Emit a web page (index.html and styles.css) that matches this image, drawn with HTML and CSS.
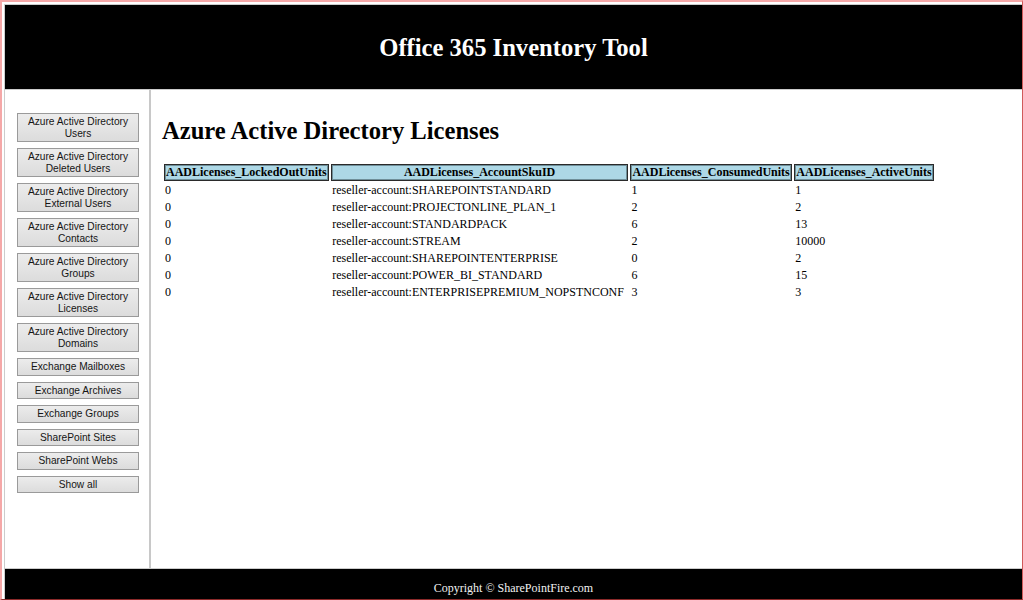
FILE: index.html
```html
<!DOCTYPE html>
<html>
<head>
<meta charset="utf-8">
<title>Office 365 Inventory Tool</title>
<link rel="stylesheet" href="styles.css">
</head>
<body>
<div class="window">
  <div class="wrap">
    <header class="top">
      <h1 class="title">Office 365 Inventory Tool</h1>
    </header>
    <div class="middle">
      <nav class="side">
        <button class="btn">Azure Active Directory<br>Users</button>
        <button class="btn">Azure Active Directory<br>Deleted Users</button>
        <button class="btn">Azure Active Directory<br>External Users</button>
        <button class="btn">Azure Active Directory<br>Contacts</button>
        <button class="btn">Azure Active Directory<br>Groups</button>
        <button class="btn">Azure Active Directory<br>Licenses</button>
        <button class="btn">Azure Active Directory<br>Domains</button>
        <button class="btn">Exchange Mailboxes</button>
        <button class="btn">Exchange Archives</button>
        <button class="btn">Exchange Groups</button>
        <button class="btn">SharePoint Sites</button>
        <button class="btn">SharePoint Webs</button>
        <button class="btn">Show all</button>
      </nav>
      <main class="content">
        <h1 class="page-title">Azure Active Directory Licenses</h1>
        <table class="grid">
          <thead>
            <tr>
              <th>AADLicenses_LockedOutUnits</th>
              <th>AADLicenses_AccountSkuID</th>
              <th>AADLicenses_ConsumedUnits</th>
              <th>AADLicenses_ActiveUnits</th>
            </tr>
          </thead>
          <tbody>
            <tr><td>0</td><td class="sku">reseller-account:SHAREPOINTSTANDARD</td><td>1</td><td>1</td></tr>
            <tr><td>0</td><td class="sku">reseller-account:PROJECTONLINE_PLAN_1</td><td>2</td><td>2</td></tr>
            <tr><td>0</td><td class="sku">reseller-account:STANDARDPACK</td><td>6</td><td>13</td></tr>
            <tr><td>0</td><td class="sku">reseller-account:STREAM</td><td>2</td><td>10000</td></tr>
            <tr><td>0</td><td class="sku">reseller-account:SHAREPOINTENTERPRISE</td><td>0</td><td>2</td></tr>
            <tr><td>0</td><td class="sku">reseller-account:POWER_BI_STANDARD</td><td>6</td><td>15</td></tr>
            <tr><td>0</td><td class="sku">reseller-account:ENTERPRISEPREMIUM_NOPSTNCONF</td><td>3</td><td>3</td></tr>
          </tbody>
        </table>
      </main>
    </div>
    <footer class="bottom">Copyright © SharePointFire.com</footer>
  </div>
</div>
</body>
</html>
```

FILE: styles.css
```css
html, body {
  margin: 0;
  padding: 0;
  background: #ffffff;
}

body {
  font-family: "Liberation Serif", "Times New Roman", serif;
  font-size: 12px;
  color: #000;
}

.window {
  box-sizing: border-box;
  width: 1023px;
  height: 600px;
  overflow: hidden;
  border-left: 2px solid #f5a8a8;
  border-top: 2px solid #f5a8a8;
  border-right: 1px solid #d05a5a;
  border-bottom: 1px solid #8c2a2a;
  padding: 2px 0 0 2px;
}

.wrap {
  border-left: 1px solid #cccccc;
  border-top: 1px solid #cccccc;
  display: flex;
  flex-direction: column;
  height: 595px;
}

.top {
  background: #000;
  height: 84px;
  border-bottom: 1px solid #cccccc;
  display: flex;
  align-items: center;
  justify-content: center;
}

.title {
  margin: 0;
  color: #fff;
  font-size: 24.6px;
  font-weight: bold;
  line-height: 27px;
}

.middle {
  display: flex;
  height: 478px;
  border-bottom: 1px solid #cccccc;
}

.side {
  width: 132px;
  padding: 23px 0 0 12px;
  border-right: 2px solid #c8c8c8;
  display: flex;
  flex-direction: column;
  align-items: flex-start;
  gap: 6px;
}

.btn {
  width: 122px;
  margin: 0;
  padding: 2px 0;
  font-family: "Liberation Sans", Arial, sans-serif;
  font-size: 10.2px;
  line-height: 11.5px;
  color: #151515;
  background: linear-gradient(#ececec, #dcdcdc);
  border: 1px solid #9a9a9a;
  border-radius: 0;
  text-align: center;
}

.content {
  flex: 1;
  padding: 11px 11px 0 11px;
}

.page-title {
  margin: 16px 0 18px 0;
  font-size: 24.6px;
  font-weight: bold;
  line-height: 27px;
}

.grid {
  border-collapse: separate;
  border-spacing: 2px;
  font-size: 12px;
}

.grid th,
.grid td {
  padding: 1px 1.5px 1px 1px;
  line-height: 13px;
}

.grid .sku {
  padding-right: 4.5px;
}

.grid th {
  background: #add8e6;
  border: 1px solid #2a2a2a;
  box-shadow: inset 0 0 0 1px #6f8f99;
  font-weight: bold;
  text-align: center;
}

.grid td {
  text-align: left;
  white-space: nowrap;
}

.bottom {
  background: #000;
  color: #f2f2f2;
  height: 30px;
  box-sizing: border-box;
  padding-top: 12px;
  text-align: center;
  font-size: 12px;
  line-height: 15px;
}
```
